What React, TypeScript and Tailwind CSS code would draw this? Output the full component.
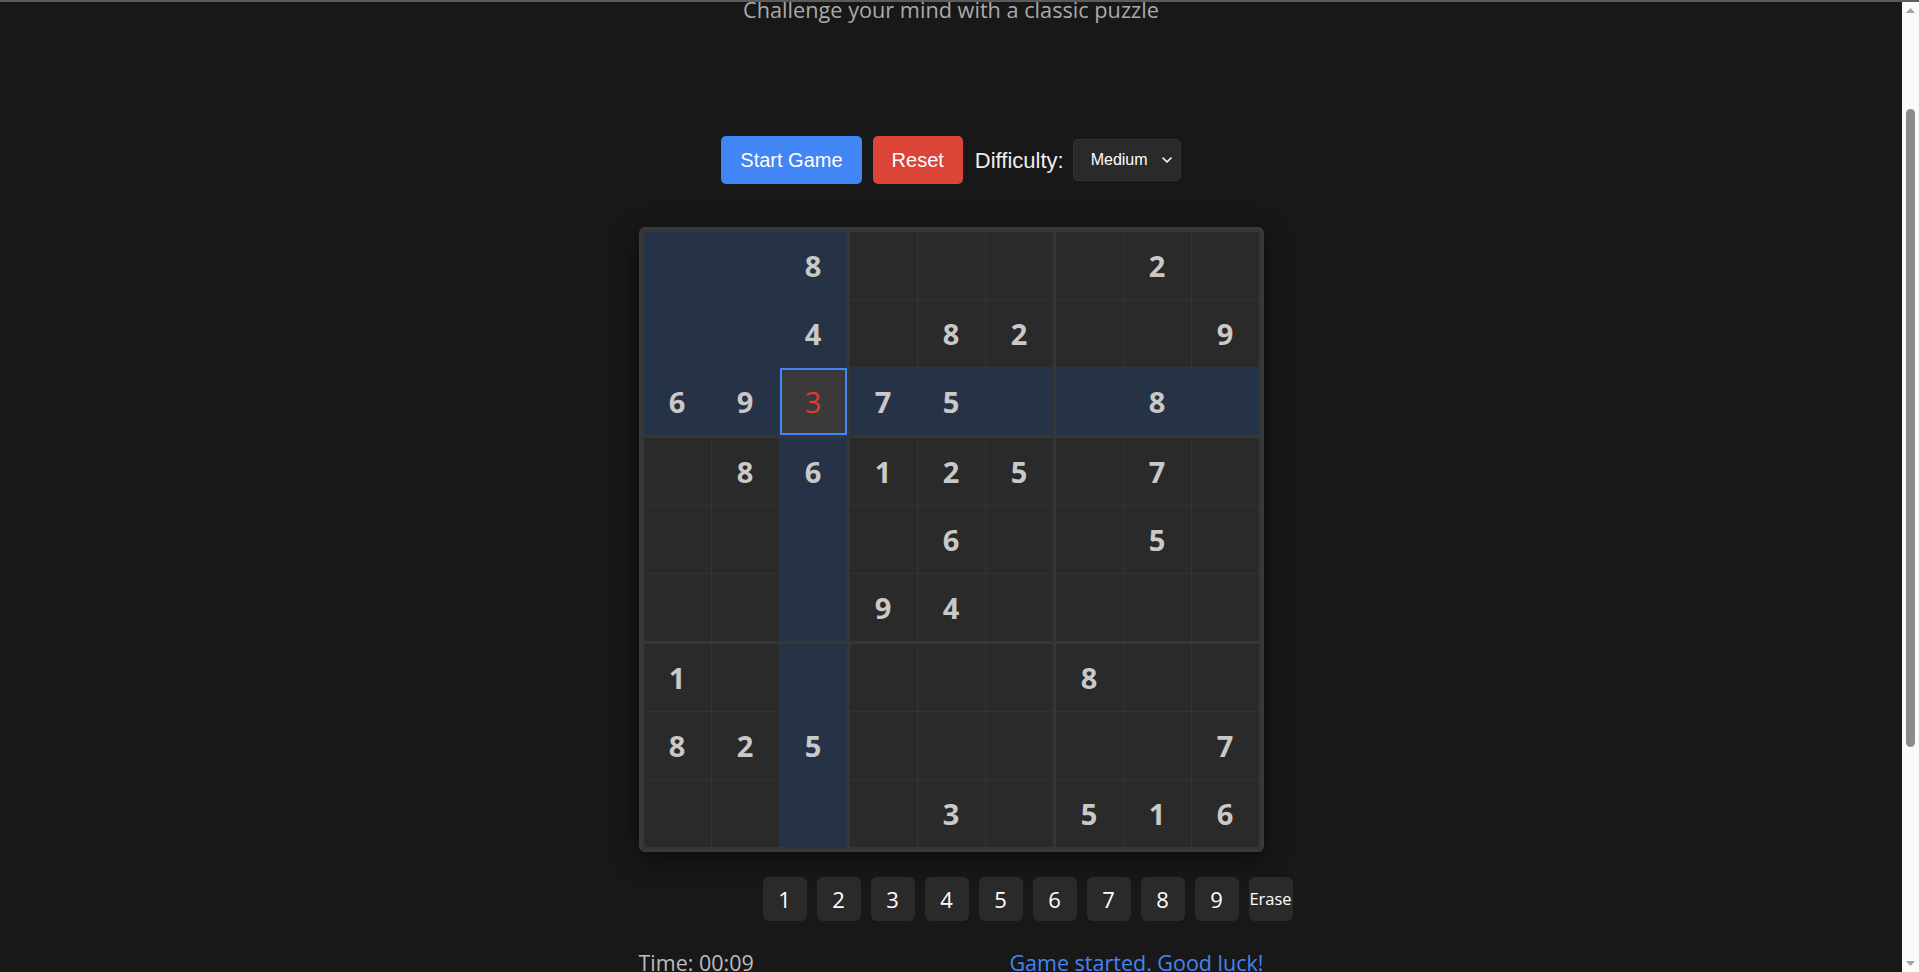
import React from "react";

const puzzle: number[][] = [
  [0, 0, 8, 0, 0, 0, 0, 2, 0],
  [0, 0, 4, 0, 8, 2, 0, 0, 9],
  [6, 9, 3, 7, 5, 0, 0, 8, 0],
  [0, 8, 6, 1, 2, 5, 0, 7, 0],
  [0, 0, 0, 0, 6, 0, 0, 5, 0],
  [0, 0, 0, 9, 4, 0, 0, 0, 0],
  [1, 0, 0, 0, 0, 0, 8, 0, 0],
  [8, 2, 5, 0, 0, 0, 0, 0, 7],
  [0, 0, 0, 0, 3, 0, 5, 1, 6],
];

const SEL_R = 2;
const SEL_C = 2;

function Cell({ r, c }: { r: number; c: number }) {
  const v = puzzle[r][c];
  const selected = r === SEL_R && c === SEL_C;
  const sameBox =
    Math.floor(r / 3) === Math.floor(SEL_R / 3) && Math.floor(c / 3) === Math.floor(SEL_C / 3);
  const highlighted = r === SEL_R || c === SEL_C || sameBox;
  if (selected) {
    return (
      <div className="flex h-[67px] w-[67px] items-center justify-center border-2 border-[#4285f4] bg-[#3a3a3a] text-[29px] font-normal text-[#e53935]">
        {v}
      </div>
    );
  }
  return (
    <div
      className={
        highlighted
          ? "flex h-[67px] w-[67px] items-center justify-center bg-[#263346] text-[29px] font-bold text-[#c9c9c9]"
          : "flex h-[67px] w-[67px] items-center justify-center bg-[#2a2a2a] text-[29px] font-bold text-[#c9c9c9]"
      }
    >
      {v !== 0 ? v : ""}
    </div>
  );
}

function Box({ b }: { b: number }) {
  const br = Math.floor(b / 3) * 3;
  const bc = (b % 3) * 3;
  const cells = [];
  for (let i = 0; i < 9; i++) {
    const r = br + Math.floor(i / 3);
    const c = bc + (i % 3);
    cells.push(<Cell key={i} r={r} c={c} />);
  }
  return <div className="grid grid-cols-3 gap-px bg-[#333333]">{cells}</div>;
}

function Chevron() {
  return (
    <svg width="10" height="6" viewBox="0 0 10 6" fill="none">
      <path d="M1 1L5 5L9 1" stroke="#ffffff" strokeWidth="1.6" strokeLinecap="round" strokeLinejoin="round" />
    </svg>
  );
}

function Scrollbar() {
  return (
    <div className="flex w-[17px] flex-col items-center bg-[#fafafa]">
      <div className="flex h-[17px] w-full items-center justify-center">
        <svg width="9" height="5" viewBox="0 0 9 5">
          <path d="M0 5L4.5 0L9 5Z" fill="#a3a3a3" />
        </svg>
      </div>
      <div className="mt-[90px] h-[638px] w-[9px] rounded-full bg-[#8b8b8b]" />
      <div className="flex-1" />
      <div className="flex h-[17px] w-full items-center justify-center">
        <svg width="9" height="5" viewBox="0 0 9 5">
          <path d="M0 0L4.5 5L9 0Z" fill="#a3a3a3" />
        </svg>
      </div>
    </div>
  );
}

export default function App() {
  return (
    <div className="flex h-screen w-full flex-col overflow-hidden bg-[#181818] font-['Open_Sans',sans-serif]">
      <div className="h-[2px] w-full bg-[#5c5c5c]" />
      <div className="flex min-h-0 flex-1">
        <main className="flex flex-1 flex-col items-center overflow-hidden">
          <p className="mt-[-7px] text-[21.7px] leading-[30px] text-[#aaaaaa]">
            Challenge your mind with a classic puzzle
          </p>

          <div className="mt-[111px] flex items-center font-['Liberation_Sans',Arial,sans-serif]">
            <button className="h-[48px] rounded-[5px] bg-[#4285f4] px-[19px] text-[20px] text-white">
              Start Game
            </button>
            <button className="ml-[11px] h-[48px] rounded-[5px] bg-[#db4437] px-[19px] text-[20px] text-white">
              Reset
            </button>
            <span className="ml-[12px] text-[22px] text-[#eeeeee]">Difficulty:</span>
            <div className="ml-[9px] flex h-[42px] w-[108px] items-center justify-between rounded-[5px] border border-[#333333] bg-[#2a2a2a] pl-[17px] pr-[8px] text-[16px] text-white">
              <span>Medium</span>
              <Chevron />
            </div>
          </div>

          <div className="mt-[43px] rounded-[6px] border-2 border-[#3a3a3a] bg-[#363636] p-[3px] shadow-[0_6px_24px_rgba(0,0,0,0.55)]">
            <div className="grid grid-cols-3 gap-[3px]">
              {Array.from({ length: 9 }, (_, b) => (
                <Box key={b} b={b} />
              ))}
            </div>
          </div>

          <div className="mt-[25px] flex w-[625px] gap-[10px] pl-[124px]">
            {[1, 2, 3, 4, 5, 6, 7, 8, 9].map((n) => (
              <button
                key={n}
                className="flex h-[44px] w-[44px] shrink-0 items-center justify-center rounded-[6px] bg-[#2a2a2a] text-[22px] text-white"
              >
                {n}
              </button>
            ))}
            <button className="flex h-[44px] w-[44px] shrink-0 items-center justify-center whitespace-nowrap rounded-[6px] bg-[#2a2a2a] text-[16.5px] font-medium text-white">
              Erase
            </button>
          </div>

          <div className="mt-[27px] flex w-[625px] justify-between text-[21.5px] leading-[30px]">
            <span className="text-[#bdbdbd]">Time: 00:09</span>
            <span className="text-[#4285f4]">Game started. Good luck!</span>
          </div>
        </main>
        <Scrollbar />
      </div>
    </div>
  );
}
